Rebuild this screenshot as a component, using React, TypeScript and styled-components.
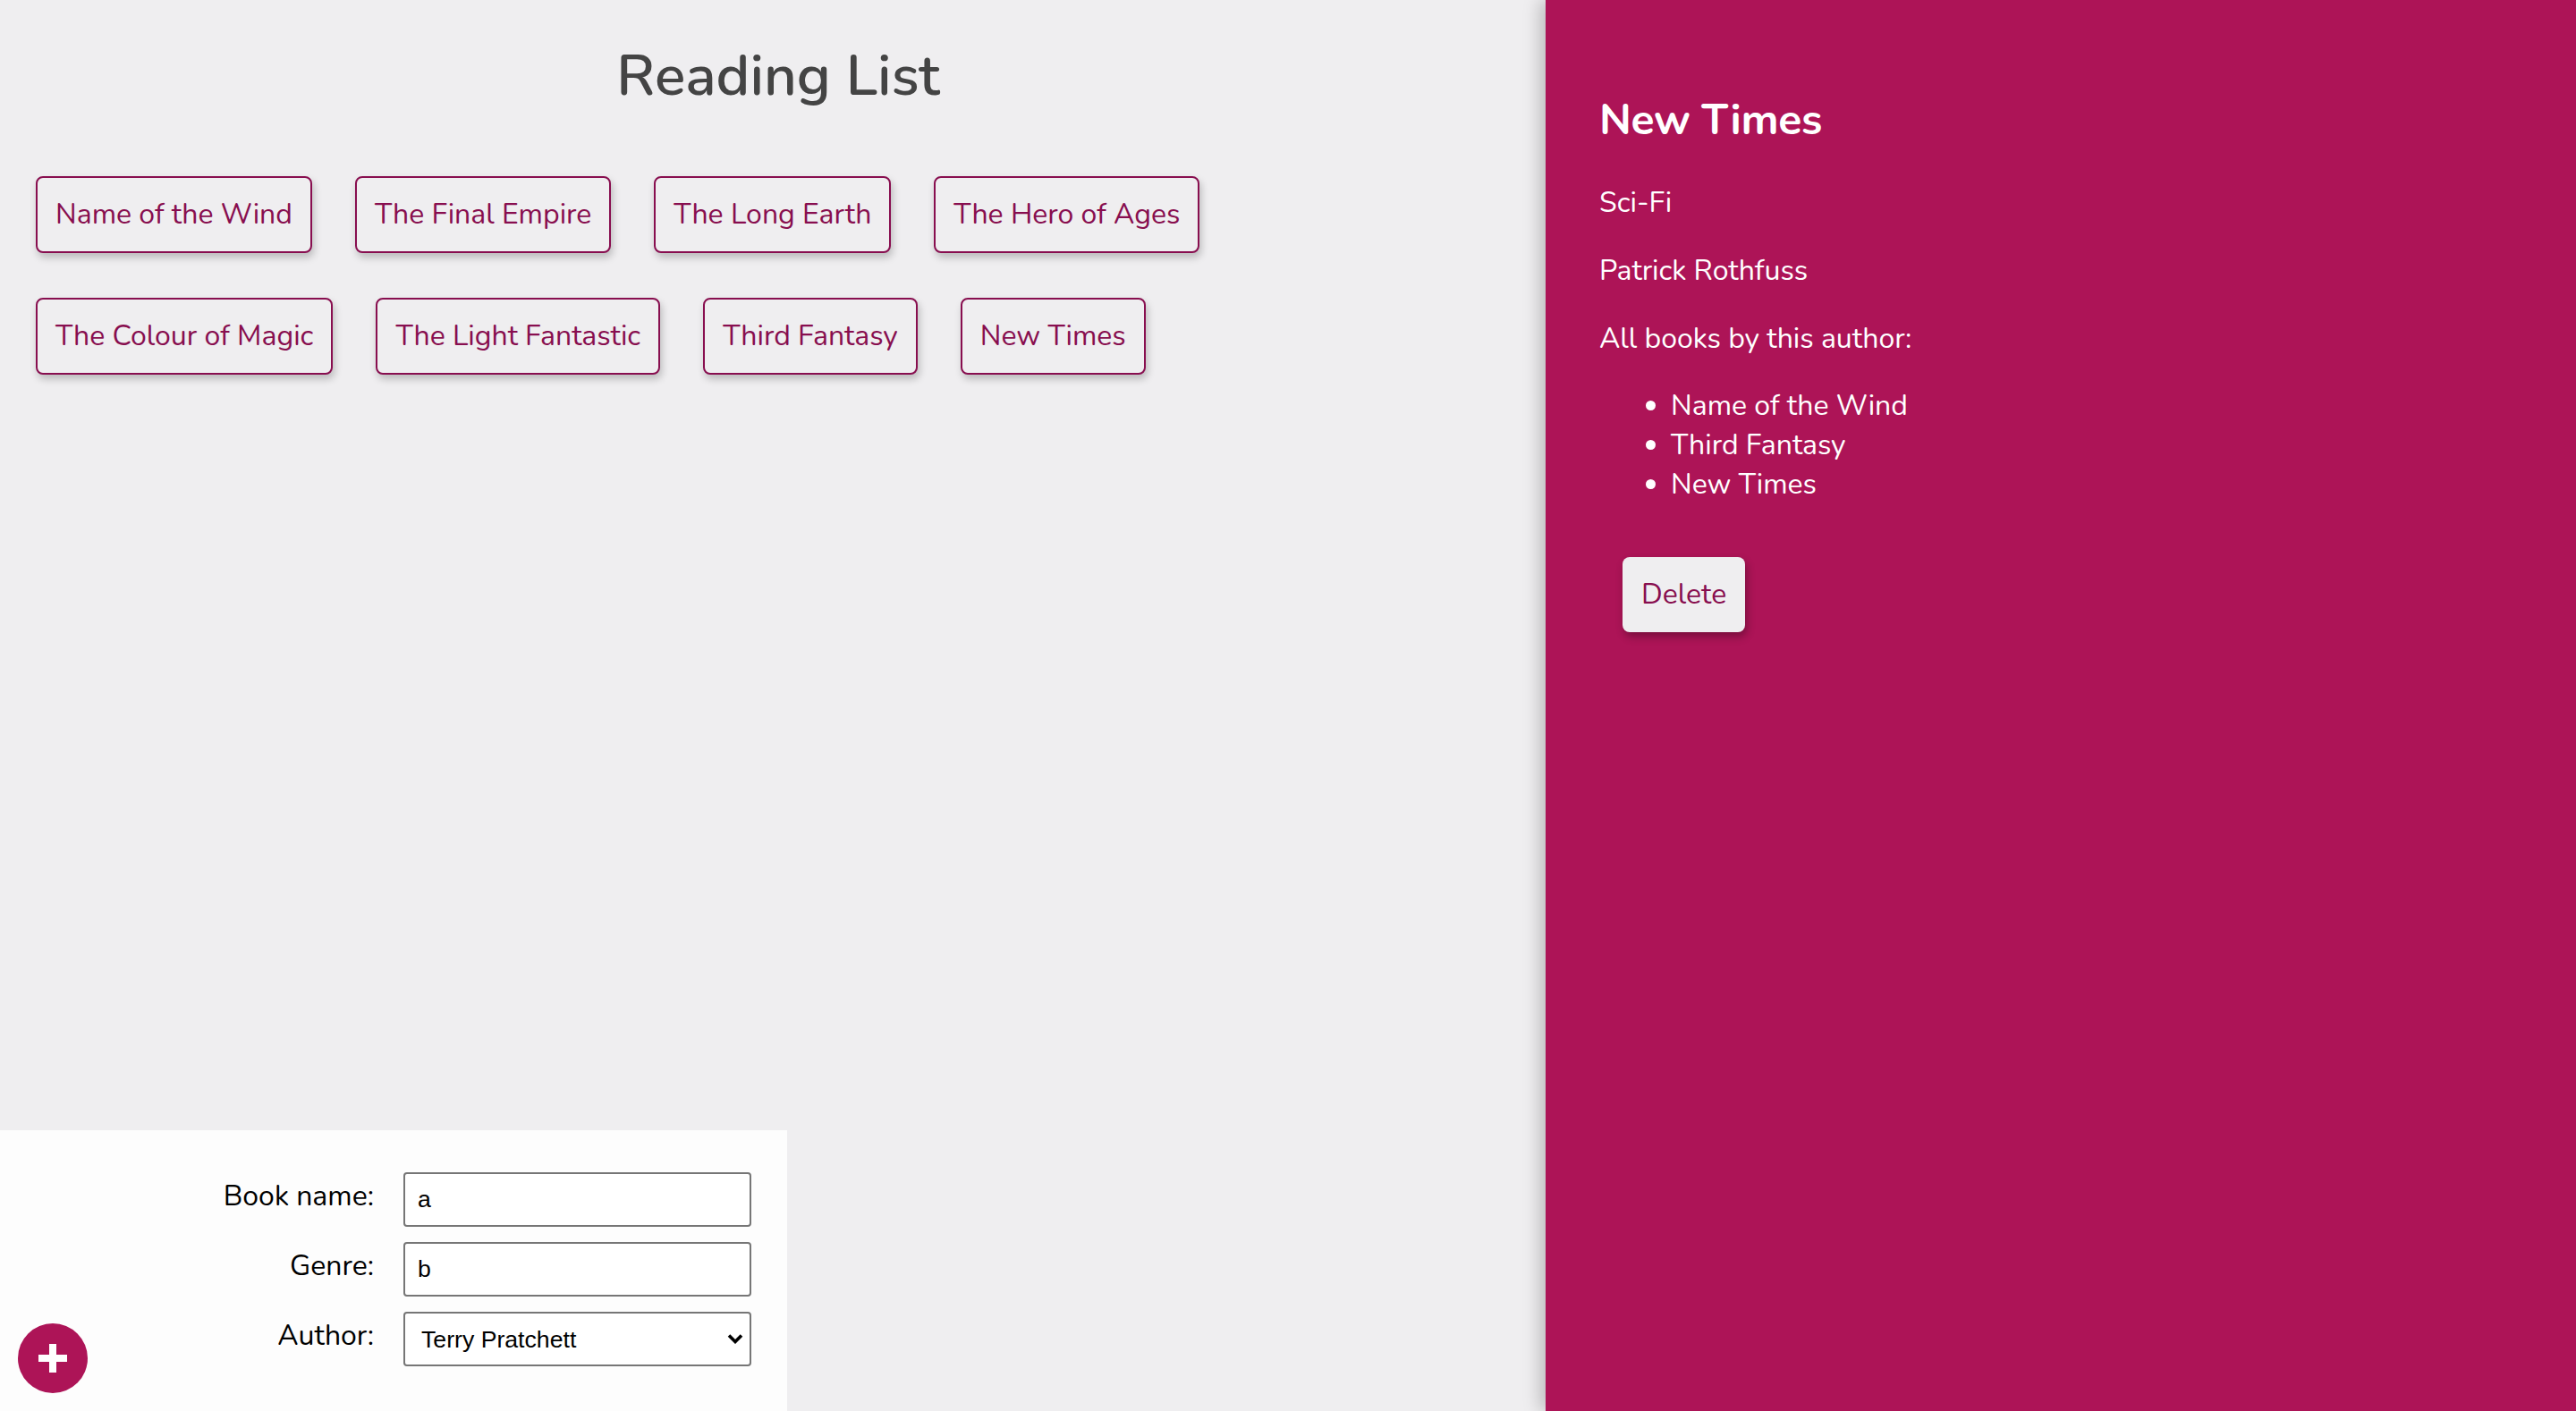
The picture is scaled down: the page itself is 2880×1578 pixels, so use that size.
import React, { FC, useState } from "react";
import styled, { createGlobalStyle } from "styled-components";

interface Book {
  name: string;
  genre: string;
  author: string;
}

const books: Book[] = [
  { name: "Name of the Wind", genre: "Fantasy", author: "Patrick Rothfuss" },
  { name: "The Final Empire", genre: "Fantasy", author: "Brandon Sanderson" },
  { name: "The Long Earth", genre: "Sci-Fi", author: "Terry Pratchett" },
  { name: "The Hero of Ages", genre: "Fantasy", author: "Brandon Sanderson" },
  { name: "The Colour of Magic", genre: "Fantasy", author: "Terry Pratchett" },
  { name: "The Light Fantastic", genre: "Fantasy", author: "Terry Pratchett" },
  { name: "Third Fantasy", genre: "Fantasy", author: "Patrick Rothfuss" },
  { name: "New Times", genre: "Sci-Fi", author: "Patrick Rothfuss" },
];

const authors = ["Terry Pratchett", "Patrick Rothfuss", "Brandon Sanderson"];

const GlobalStyle = createGlobalStyle`
  html, body {
    margin: 0;
    padding: 0;
  }
  body {
    font-family: "Nunito", Lato, "Open Sans", sans-serif;
    font-size: 32px;
    line-height: 1.364;
    background: #efeef0;
  }
`;

export default function App() {
  const [selected] = useState(books[books.length - 1]);
  const byAuthor = books.filter((b) => b.author === selected.author);

  return (
    <>
      <GlobalStyle />
      <StyledPage>
        <StyledMain>
          <StyledTitle>Reading List</StyledTitle>
          <StyledBookList>
            {books.map((book, index) => (
              <StyledBookItem key={index}>{book.name}</StyledBookItem>
            ))}
          </StyledBookList>
          <AddBookForm />
        </StyledMain>
        <StyledDetails>
          <StyledDetailsTitle>{selected.name}</StyledDetailsTitle>
          <StyledText>{selected.genre}</StyledText>
          <StyledText>{selected.author}</StyledText>
          <StyledText>All books by this author:</StyledText>
          <StyledAuthorUl>
            {byAuthor.map((book, index) => (
              <li key={index}>{book.name}</li>
            ))}
          </StyledAuthorUl>
          <StyledDelete>Delete</StyledDelete>
        </StyledDetails>
      </StyledPage>
    </>
  );
}

const AddBookForm: FC = () => {
  return (
    <StyledForm>
      <StyledGrid>
        <StyledLabel>Book name:</StyledLabel>
        <StyledInput type="text" defaultValue="a" />
        <StyledLabel>Genre:</StyledLabel>
        <StyledInput type="text" defaultValue="b" />
        <StyledLabel>Author:</StyledLabel>
        <StyledSelectWrap>
          <StyledSelect defaultValue="Terry Pratchett">
            {authors.map((author) => (
              <option key={author}>{author}</option>
            ))}
          </StyledSelect>
          <StyledChevron width="18" height="12" viewBox="0 0 18 12">
            <path
              d="M2 2.5l7 7 7-7"
              fill="none"
              stroke="#000"
              strokeWidth="3.6"
            />
          </StyledChevron>
        </StyledSelectWrap>
      </StyledGrid>
      <StyledAddButton aria-label="add book">
        <svg width="32" height="32" viewBox="0 0 32 32">
          <path d="M16 0v32M0 16h32" stroke="#fff" strokeWidth="8" />
        </svg>
      </StyledAddButton>
    </StyledForm>
  );
};

const StyledPage = styled.div`
  display: flex;
  height: 100vh;
  overflow: hidden;
`;
const StyledMain = styled.div`
  width: 60%;
  display: flex;
  flex-direction: column;
  background: #efeef0;
`;
const StyledTitle = styled.h1`
  margin: 42px 0 0;
  padding-left: 12px;
  text-align: center;
  font-size: 64px;
  font-weight: 600;
  color: #444;
`;
const StyledBookList = styled.ul`
  display: flex;
  flex-wrap: wrap;
  column-gap: 48px;
  row-gap: 50px;
  margin: 68px 0 0;
  padding: 0 40px;
  list-style: none;
`;
const StyledBookItem = styled.li`
  padding: 19px 20px;
  border: 2px solid #880e4f;
  border-radius: 8px;
  color: #880e4f;
  background: #efeef0;
  box-shadow: 2px 5px 8px rgba(0, 0, 0, 0.22);
  cursor: pointer;
`;
const StyledDetails = styled.div`
  position: relative;
  z-index: 1;
  width: 40%;
  padding: 0 60px;
  box-sizing: border-box;
  background: #ad1457;
  color: #fff;
  box-shadow: -6px 0 18px rgba(0, 0, 0, 0.22);
`;
const StyledDetailsTitle = styled.h2`
  margin: 102px 0 38px;
  font-size: 48px;
  font-weight: 700;
  letter-spacing: -0.3px;
`;
const StyledText = styled.p`
  margin: 32px 0;
`;
const StyledAuthorUl = styled.ul`
  margin: 32px 0;
  padding-left: 80px;
`;
const StyledDelete = styled.button`
  display: block;
  margin: 60px 0 0 26px;
  padding: 20px 21px;
  border: none;
  border-radius: 8px;
  font: inherit;
  color: #880e4f;
  background: #efeef0;
  box-shadow: 2px 5px 10px rgba(0, 0, 0, 0.3);
`;
const StyledForm = styled.form`
  position: relative;
  margin-top: auto;
  width: 880px;
  padding: 47px 41px 50px 0;
  box-sizing: border-box;
  background: #fdfdfd;
`;
const StyledGrid = styled.div`
  display: grid;
  grid-template-columns: 418px 389px;
  column-gap: 33px;
  row-gap: 17px;
`;
const StyledLabel = styled.label`
  padding-top: 5px;
  text-align: right;
  color: #000;
`;
const StyledInput = styled.input`
  height: 61px;
  box-sizing: border-box;
  padding: 0 14px;
  border: 2px solid #767676;
  border-radius: 4px;
  font-family: "Liberation Sans", Arial, sans-serif;
  font-size: 26.67px;
  color: #000;
  background: #fff;
`;
const StyledSelectWrap = styled.div`
  position: relative;
  display: flex;
`;
const StyledSelect = styled.select`
  appearance: none;
  width: 100%;
  height: 61px;
  box-sizing: border-box;
  padding: 0 18px;
  border: 2px solid #767676;
  border-radius: 4px;
  font-family: "Liberation Sans", Arial, sans-serif;
  font-size: 26.67px;
  color: #000;
  background: #fff;
`;
const StyledChevron = styled.svg`
  position: absolute;
  right: 9px;
  top: 24px;
  pointer-events: none;
`;
const StyledAddButton = styled.button`
  position: absolute;
  left: 20px;
  bottom: 20px;
  width: 78px;
  height: 78px;
  padding: 0;
  border: none;
  border-radius: 50%;
  background: #ad1457;
  display: flex;
  align-items: center;
  justify-content: center;
  cursor: pointer;
`;
